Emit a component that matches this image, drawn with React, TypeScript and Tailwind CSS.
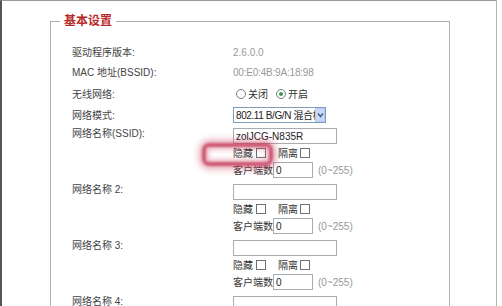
const font = { fontFamily: '"Liberation Sans", "Noto Sans CJK SC", sans-serif' };

function Checkbox() {
  return <span className="inline-block h-[10px] w-[10px] border border-[#707070] bg-white" />;
}

function Radio({ checked }: { checked?: boolean }) {
  return (
    <span className="inline-flex h-[10px] w-[10px] items-center justify-center rounded-full border border-[#6f7f8f] bg-white">
      {checked && <span className="h-[4px] w-[4px] rounded-full bg-[#3c9a4c]" />}
    </span>
  );
}

function TextBox({ value, w = "w-[104px]" }: { value?: string; w?: string }) {
  return (
    <div className={`flex h-4 items-center border border-[#a5acb2] bg-white pl-[2px] text-[#222] ${w}`}>
      {value}
    </div>
  );
}

function Row({ label, children, h }: { label: string; children: React.ReactNode; h: string }) {
  return (
    <div className={`flex items-center ${h}`}>
      <div className="w-[161px] shrink-0 text-[#444]">{label}</div>
      <div className="flex items-center">{children}</div>
    </div>
  );
}

function SsidBlock({ label, value }: { label: string; value?: string }) {
  return (
    <div className="mb-[6px] flex">
      <div className="w-[161px] shrink-0 leading-[12px] text-[#444]">{label}</div>
      <div className="flex flex-col">
        <TextBox value={value} />
        <div className="flex h-[18px] items-center text-[#333]">
          <span>隐藏</span>
          <span className="ml-[3px] flex"><Checkbox /></span>
          <span className="ml-[12px]">隔离</span>
          <span className="ml-[2px] flex"><Checkbox /></span>
        </div>
        <div className="flex h-4 items-center text-[#333]">
          <span className="w-[40px]">客户端数</span>
          <TextBox value="0" w="w-[40px]" />
          <span className="ml-[5px] text-[#999]">(0~255)</span>
        </div>
      </div>
    </div>
  );
}

export default function App() {
  return (
    <div className="relative h-[306px] w-[502px] overflow-hidden bg-white text-[10px]" style={font}>
      <div className="h-[400px] w-[497px] border-t border-l-2 border-r border-t-[#9a9a9a] border-l-[#555] border-r-[#b5b5b5]">
        <fieldset className="ml-[48px] mt-[12px] w-[400px] border border-[#b0b0b0] px-[9px] pt-[13px] pb-4">
          <legend className="px-1 text-[12px] font-bold leading-4 text-[#b82a2a]">基本设置</legend>
          <div className="pl-3">
            <Row label="驱动程序版本:" h="h-[20px]">
              <span className="text-[#999]">2.6.0.0</span>
            </Row>
            <Row label="MAC 地址(BSSID):" h="h-[21px]">
              <span className="tracking-[-0.2px] text-[#999]">00:E0:4B:9A:18:98</span>
            </Row>
            <Row label="无线网络:" h="h-[22px]">
              <span className="ml-[3px] flex"><Radio /></span>
              <span className="ml-[2px] text-[#333]">关闭</span>
              <span className="ml-[8px] flex"><Radio checked /></span>
              <span className="ml-[2px] text-[#333]">开启</span>
            </Row>
            <Row label="网络模式:" h="h-[20px]">
              <div className="flex h-4 w-[93px] items-center border border-[#7f9db9] bg-white">
                <span className="flex-1 overflow-hidden whitespace-nowrap pl-[2px] tracking-[-0.4px] text-[#222]">802.11 B/G/N 混合模式</span>
                <span className="flex h-[14px] w-[10px] shrink-0 items-center justify-center border border-[#b8c9f0] bg-[#c9d8fb]">
                  <svg width="7" height="6" viewBox="0 0 7 6">
                    <path d="M1 1.5 L3.5 4.5 L6 1.5" fill="none" stroke="#4d6185" strokeWidth="1.6" />
                  </svg>
                </span>
              </div>
            </Row>
            <div className="h-[3px]" />
            <SsidBlock label="网络名称(SSID):" value="zolJCG-N835R" />
            <SsidBlock label="网络名称 2:" />
            <SsidBlock label="网络名称 3:" />
            <SsidBlock label="网络名称 4:" />
          </div>
        </fieldset>
      </div>
      <div className="absolute left-[202px] top-[143px] h-[23px] w-[71px] rounded-[7px] border-[4px] border-[#c63c5c] opacity-85 shadow-[0_0_6px_3px_rgba(200,50,80,0.5),inset_0_0_5px_2px_rgba(200,50,80,0.5)] blur-[1.2px]" />
    </div>
  );
}
